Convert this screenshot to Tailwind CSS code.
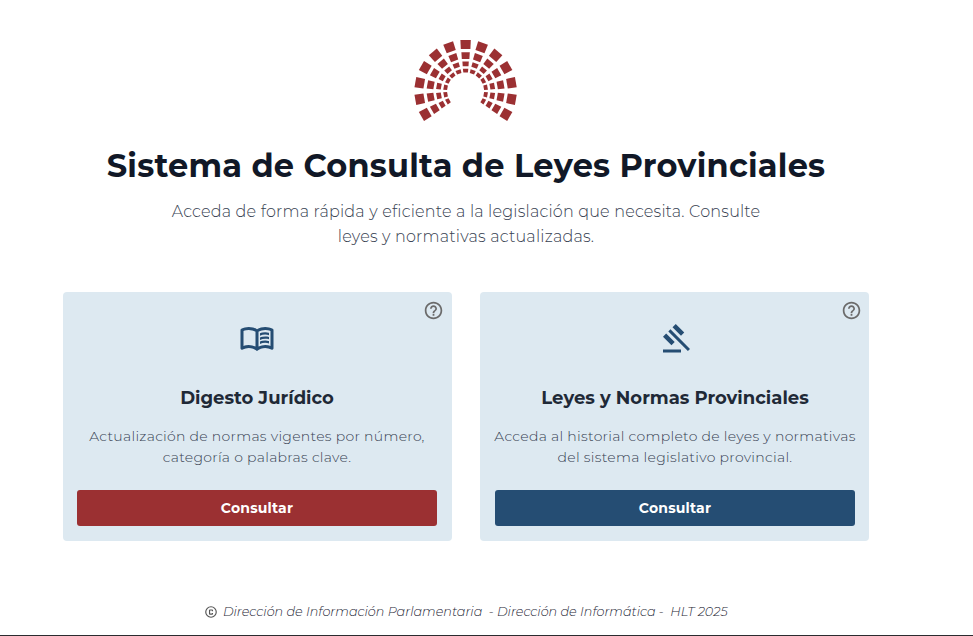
<!DOCTYPE html>
<html lang="es">
<head>
<meta charset="utf-8">
<title>Sistema de Consulta de Leyes Provinciales</title>
<script src="https://cdn.jsdelivr.net/npm/@tailwindcss/browser@4"></script>
</head>
<body class="h-[636px] overflow-hidden bg-white font-[Montserrat,Inter,sans-serif]">
<div class="flex h-[636px] flex-col border-b border-[#2b2b2f]">
<div class="flex w-[932px] flex-col items-center pt-[38px]">
  <svg class="h-[88px] w-[104px]" viewBox="-51.6 -53 104 88" fill="#9b3032" role="img" aria-label="Logo">
    <defs>
      <g id="ray">
        <path d="M-5.2-51H5.2L4.8-42H-4.8z"/>
        <path d="M-4.200-38.800H4.200L3.800-32.100H-3.800z"/>
        <path d="M-3.200-29.400H3.200L2.900-24.700H-2.900z"/>
        <path d="M-2.700-22.200H2.700L2.300-18.400H-2.300z"/>
      </g>
    </defs>
    <use href="#ray" transform="rotate(-120)"/>
    <use href="#ray" transform="rotate(-100)"/>
    <use href="#ray" transform="rotate(-80)"/>
    <use href="#ray" transform="rotate(-60)"/>
    <use href="#ray" transform="rotate(-40)"/>
    <use href="#ray" transform="rotate(-20)"/>
    <use href="#ray"/>
    <use href="#ray" transform="rotate(20)"/>
    <use href="#ray" transform="rotate(40)"/>
    <use href="#ray" transform="rotate(60)"/>
    <use href="#ray" transform="rotate(80)"/>
    <use href="#ray" transform="rotate(100)"/>
    <use href="#ray" transform="rotate(120)"/>
  </svg>
  <h1 class="mt-5 text-[32px] leading-10 font-bold tracking-[0.22px] whitespace-nowrap text-[#111827]">Sistema de Consulta de Leyes Provinciales</h1>
  <p class="mt-[13px] text-center text-base leading-[25px] font-light tracking-[0.2px] whitespace-nowrap text-[#374151]">
    <span class="block">Acceda de forma rápida y eficiente a la legislación que necesita. Consulte</span>
    <span class="block">leyes y normativas actualizadas.</span>
  </p>
  <main class="mt-[43px] grid w-[806px] grid-cols-2 gap-7">
    <section class="relative flex h-[249px] flex-col items-center rounded bg-[#dde9f1] pr-[15px] pl-3.5 pt-[29px]">
      <svg class="absolute top-[8px] right-[8px] size-[21px]" viewBox="0 0 24 24" fill="#6b6b6b"><path d="M11 18h2v-2h-2v2zm1-16C6.480 2 2 6.480 2 12s4.480 10 10 10 10-4.480 10-10S17.520 2 12 2zm0 18c-4.410 0-8-3.590-8-8s3.590-8 8-8 8 3.590 8 8-3.590 8-8 8zm0-14c-2.210 0-4 1.790-4 4h2c0-1.100.9-2 2-2s2 .9 2 2c0 2-3 1.750-3 5h2c0-2.250 3-2.500 3-5 0-2.210-1.790-4-4-4z"/></svg>
      <svg class="size-9" viewBox="0 -960 960 960" fill="#254d73"><path d="M560-564v-68q33-14 67.500-21t72.500-7q26 0 51 4t49 10v64q-24-9-48.500-13.500T700-600q-38 0-73 9.500T560-564Zm0 220v-68q33-14 67.500-21t72.500-7q26 0 51 4t49 10v64q-24-9-48.500-13.500T700-380q-38 0-73 9t-67 27Zm0-110v-68q33-14 67.500-21t72.500-7q26 0 51 4t49 10v64q-24-9-48.500-13.500T700-490q-38 0-73 9.500T560-454ZM260-320q47 0 91.500 10.500T440-278v-394q-41-24-87-36t-93-12q-36 0-71.500 7T120-692v396q35-12 69.500-18t70.500-6Zm260 42q44-21 88.500-31.500T700-320q36 0 70.500 6t69.500 18v-396q-33-14-68.500-21t-71.500-7q-47 0-93 12t-87 36v394Zm-40 118q-48-38-104-59t-116-21q-42 0-82.500 11T100-198q-21 11-40.500-1T40-234v-482q0-11 5.500-21T62-752q46-24 96-36t102-12q58 0 113.500 15T480-740q51-30 106.500-45T700-800q52 0 102 12t96 36q11 5 16.500 15t5.500 21v482q0 23-19.500 35t-40.500 1q-37-20-77.500-31T700-240q-60 0-116 21t-104 59Z"/></svg>
      <h2 class="mt-[27px] text-lg leading-7 font-bold whitespace-nowrap text-[#1f2937]">Digesto Jurídico</h2>
      <p class="mt-[14px] text-center text-sm leading-[21px] font-light tracking-[0.29px] whitespace-nowrap text-[#374151]">
        <span class="block">Actualización de normas vigentes por número,</span>
        <span class="block">categoría o palabras clave.</span>
      </p>
      <button class="mt-auto mb-[15px] h-9 w-full shrink-0 rounded-[3px] bg-[#9b3032] text-sm font-bold tracking-[0.2px] text-white">Consultar</button>
    </section>
    <section class="relative flex h-[249px] flex-col items-center rounded bg-[#dde9f1] pr-3.5 pl-[15px] pt-[29px]">
      <svg class="absolute top-[8px] right-[7.5px] size-[21px]" viewBox="0 0 24 24" fill="#6b6b6b"><path d="M11 18h2v-2h-2v2zm1-16C6.480 2 2 6.480 2 12s4.480 10 10 10 10-4.480 10-10S17.520 2 12 2zm0 18c-4.410 0-8-3.590-8-8s3.590-8 8-8 8 3.590 8 8-3.590 8-8 8zm0-14c-2.210 0-4 1.790-4 4h2c0-1.100.9-2 2-2s2 .9 2 2c0 2-3 1.750-3 5h2c0-2.250 3-2.500 3-5 0-2.210-1.790-4-4-4z"/></svg>
      <svg class="size-9" viewBox="0 -960 960 960" fill="#254d73"><path d="M160-120v-80h480v80H160Zm226-194L160-540l84-86 228 226-86 86Zm254-254L414-796l86-84 226 226-86 86Zm184 408L302-682l56-56 522 522-56 56Z"/></svg>
      <h2 class="mt-[27px] text-lg leading-7 font-bold whitespace-nowrap text-[#1f2937]">Leyes y Normas Provinciales</h2>
      <p class="mt-[14px] text-center text-sm leading-[21px] font-light tracking-[0.3px] whitespace-nowrap text-[#374151]">
        <span class="block">Acceda al historial completo de leyes y normativas</span>
        <span class="block">del sistema legislativo provincial.</span>
      </p>
      <button class="mt-auto mb-[15px] h-9 w-full shrink-0 rounded-[3px] bg-[#254d73] text-sm font-bold tracking-[0.2px] text-white">Consultar</button>
    </section>
  </main>
  <footer class="mt-[61px] flex h-5 items-center text-[12.8px] font-light whitespace-pre text-[#1f2937] italic">
    <svg class="mr-[4.5px] mb-px size-3.5" viewBox="0 0 24 24" fill="#555"><path fill-rule="evenodd" d="M12 2a10 10 0 1 0 0 20 10 10 0 0 0 0-20zm0 2a8 8 0 1 1 0 16 8 8 0 0 1 0-16zM10 7.500Q8.500 7.500 8.500 9v6q0 1.500 1.500 1.500h4Q15.500 16.500 15.500 15v-1.500h-2v1h-3v-5h3v1h2V9q0-1.500-1.500-1.500z"/></svg>
    <span class="tracking-[-0.01px]">Dirección de Información Parlamentaria  - Dirección de Informática -  HLT 2025</span>
  </footer>
</div>
</div>
</body>
</html>
